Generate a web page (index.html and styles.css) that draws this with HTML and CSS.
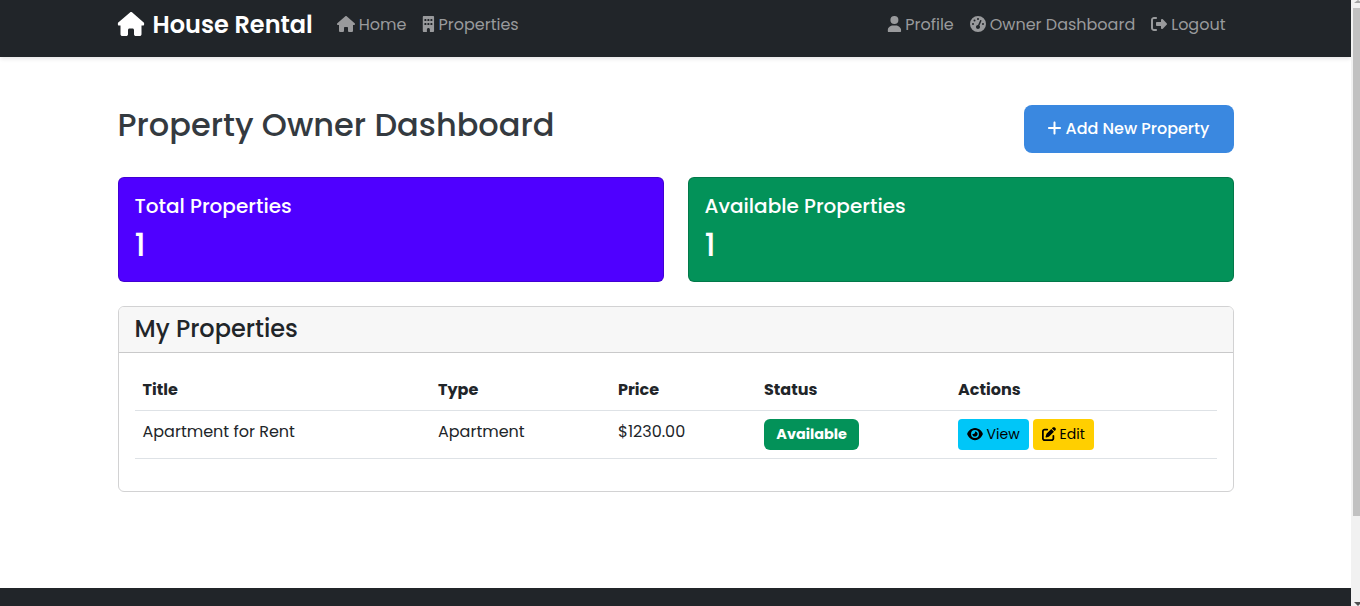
FILE: index.html
```html
<!DOCTYPE html>
<html lang="en">
<head>
<meta charset="utf-8">
<title>Property Owner Dashboard</title>
<link rel="stylesheet" href="styles.css">
</head>
<body>
<svg class="sprite" xmlns="http://www.w3.org/2000/svg">
  <symbol id="house" viewBox="0 0 576 512"><path d="M575.8 255.5c0 18-15 32.1-32 32.1h-32l.7 160.2c0 2.7-.2 5.4-.5 8.1V472c0 22.1-17.9 40-40 40H456c-1.1 0-2.2 0-3.3-.1c-1.4 .1-2.8 .1-4.2 .1H416 392c-22.1 0-40-17.9-40-40V448 384c0-17.700-14.300-32-32-32H256c-17.700 0-32 14.300-32 32v64 24c0 22.100-17.900 40-40 40H160 128.100c-1.500 0-3-.1-4.500-.2c-1.200 .1-2.400 .2-3.600 .2H104c-22.100 0-40-17.900-40-40V360c0-.9 0-1.900 .1-2.800V287.600H32c-18 0-32-14-32-32.100c0-9 3-17 10-24L266.400 8c7-7 15-8 22-8s15 2 21 7L564.800 231.500c8 7 12 15 11 24z"/></symbol>
  <symbol id="building" viewBox="0 0 384 512"><path fill-rule="evenodd" d="M48 0C21.500 0 0 21.500 0 48V464c0 26.500 21.500 48 48 48h96V432c0-26.500 21.500-48 48-48s48 21.500 48 48v80h96c26.500 0 48-21.500 48-48V48c0-26.500-21.500-48-48-48H48zM80 224h32a16 16 0 0 1 16 16v32a16 16 0 0 1-16 16H80a16 16 0 0 1-16-16v-32a16 16 0 0 1 16-16zM176 224h32a16 16 0 0 1 16 16v32a16 16 0 0 1-16 16h-32a16 16 0 0 1-16-16v-32a16 16 0 0 1 16-16zM272 224h32a16 16 0 0 1 16 16v32a16 16 0 0 1-16 16h-32a16 16 0 0 1-16-16v-32a16 16 0 0 1 16-16zM80 96h32a16 16 0 0 1 16 16v32a16 16 0 0 1-16 16H80a16 16 0 0 1-16-16v-32a16 16 0 0 1 16-16zM176 96h32a16 16 0 0 1 16 16v32a16 16 0 0 1-16 16h-32a16 16 0 0 1-16-16v-32a16 16 0 0 1 16-16zM272 96h32a16 16 0 0 1 16 16v32a16 16 0 0 1-16 16h-32a16 16 0 0 1-16-16v-32a16 16 0 0 1 16-16z"/></symbol>
  <symbol id="user" viewBox="0 0 448 512"><path d="M224 256A128 128 0 1 0 224 0a128 128 0 1 0 0 256zm-45.700 48C79.800 304 0 383.800 0 482.300C0 498.700 13.300 512 29.700 512H418.300c16.400 0 29.700-13.300 29.700-29.700C448 383.800 368.200 304 269.700 304H178.300z"/></symbol>
  <symbol id="gauge" viewBox="0 0 512 512"><path fill-rule="evenodd" d="M0 256a256 256 0 1 1 512 0A256 256 0 1 1 0 256zM288 96a32 32 0 1 0 -64 0 32 32 0 1 0 64 0zM256 416c35.300 0 64-28.700 64-64c0-17.400-6.900-33.100-18.100-44.600L366 161.700c5.300-12.100-.2-26.300-12.300-31.600s-26.300 .2-31.600 12.300L257.900 288c-.6 0-1.300 0-1.900 0c-35.300 0-64 28.700-64 64s28.700 64 64 64zM176 144a32 32 0 1 0 -64 0 32 32 0 1 0 64 0zM96 288a32 32 0 1 0 0-64 32 32 0 1 0 0 64zm352-32a32 32 0 1 0 -64 0 32 32 0 1 0 64 0z"/></symbol>
  <symbol id="logout" viewBox="0 0 512 512"><path d="M377.900 105.900L500.700 228.700c7.200 7.200 11.300 17.100 11.300 27.300s-4.100 20.100-11.300 27.300L377.900 406.100c-6.400 6.400-15 9.900-24 9.900c-18.700 0-33.900-15.200-33.900-33.900l0-62.100-128 0c-17.700 0-32-14.300-32-32l0-64c0-17.700 14.300-32 32-32l128 0 0-62.100c0-18.700 15.200-33.900 33.900-33.900c9 0 17.600 3.600 24 9.900zM160 96L96 96c-17.700 0-32 14.300-32 32l0 256c0 17.700 14.300 32 32 32l64 0c17.700 0 32 14.300 32 32s-14.300 32-32 32l-64 0c-53 0-96-43-96-96L0 128C0 75 43 32 96 32l64 0c17.700 0 32 14.300 32 32s-14.300 32-32 32z"/></symbol>
  <symbol id="plus" viewBox="0 0 448 512"><path d="M256 80c0-17.700-14.300-32-32-32s-32 14.300-32 32V224H48c-17.700 0-32 14.300-32 32s14.300 32 32 32H192V432c0 17.700 14.300 32 32 32s32-14.300 32-32V288H400c17.700 0 32-14.300 32-32s-14.300-32-32-32H256V80z"/></symbol>
  <symbol id="eye" viewBox="0 0 576 512"><path fill-rule="evenodd" d="M288 32c-80.800 0-145.500 36.800-192.600 80.600C48.600 156 17.300 208 2.500 243.700c-3.300 7.900-3.300 16.700 0 24.600C17.300 304 48.600 356 95.400 399.400C142.500 443.200 207.200 480 288 480s145.500-36.800 192.600-80.600c46.800-43.500 78.100-95.400 93-131.100c3.300-7.900 3.300-16.700 0-24.600c-14.900-35.700-46.200-87.700-93-131.100C433.500 68.800 368.800 32 288 32zM144 256a144 144 0 1 1 288 0 144 144 0 1 1 -288 0zm144-64c0 35.300-28.700 64-64 64c-7.100 0-13.900-1.200-20.300-3.300c-5.500-1.800-11.900 1.600-11.700 7.400c.3 6.900 1.300 13.800 3.200 20.700c13.700 51.200 66.400 81.600 117.600 67.900s81.600-66.400 67.900-117.600c-11.100-41.500-47.800-69.400-88.600-71.100c-5.800-.2-9.200 6.100-7.400 11.700c2.100 6.400 3.300 13.200 3.300 20.300z"/></symbol>
  <symbol id="edit" viewBox="0 0 512 512"><path d="M471.600 21.700c-21.900-21.900-57.300-21.900-79.200 0L362.300 51.700l97.900 97.900 30.100-30.100c21.900-21.900 21.900-57.300 0-79.200L471.600 21.700zm-299.200 220c-6.100 6.100-10.800 13.600-13.500 21.900l-29.600 88.800c-2.900 8.600-.6 18.100 5.800 24.600s15.900 8.700 24.600 5.800l88.800-29.600c8.200-2.700 15.700-7.400 21.900-13.500L437.700 172.300 339.700 74.300 172.400 241.700zM96 64C43 64 0 107 0 160V416c0 53 43 96 96 96H352c53 0 96-43 96-96V320c0-17.700-14.300-32-32-32s-32 14.300-32 32v96c0 17.700-14.300 32-32 32H96c-17.700 0-32-14.300-32-32V160c0-17.700 14.300-32 32-32h96c17.700 0 32-14.300 32-32s-14.300-32-32-32H96z"/></symbol>
</svg>
<div class="window">
  <div class="page">
    <header class="navbar">
      <div class="container nav-row">
        <a class="brand"><svg class="icon icon-brand"><use href="#house"/></svg><span>House Rental</span></a>
        <nav class="nav-left">
          <a class="link"><svg class="icon w18"><use href="#house"/></svg><span>Home</span></a>
          <a class="link"><svg class="icon icon-building"><use href="#building"/></svg><span>Properties</span></a>
        </nav>
        <nav class="nav-right">
          <a class="link"><svg class="icon w14 icon-user"><use href="#user"/></svg><span>Profile</span></a>
          <a class="link"><svg class="icon"><use href="#gauge"/></svg><span>Owner Dashboard</span></a>
          <a class="link"><svg class="icon"><use href="#logout"/></svg><span>Logout</span></a>
        </nav>
      </div>
    </header>
    <main class="container main">
      <div class="heading">
        <h1>Property Owner Dashboard</h1>
        <a class="add"><svg class="icon w14"><use href="#plus"/></svg><span>Add New Property</span></a>
      </div>
      <div class="stats">
        <section class="stat purple"><h2>Total Properties</h2><p class="number">1</p></section>
        <section class="stat green"><h2>Available Properties</h2><p class="number">1</p></section>
      </div>
      <section class="card">
        <div class="card-head"><h3>My Properties</h3></div>
        <div class="card-body">
          <table>
            <colgroup><col class="c1"><col class="c2"><col class="c3"><col class="c4"><col></colgroup>
            <thead><tr><th>Title</th><th>Type</th><th>Price</th><th>Status</th><th>Actions</th></tr></thead>
            <tbody><tr>
              <td>Apartment for Rent</td><td>Apartment</td><td>$1230.00</td>
              <td class="control"><span class="badge">Available</span></td>
              <td class="control"><div class="actions"><a class="btn view"><svg class="icon"><use href="#eye"/></svg><span>View</span></a><a class="btn edit"><svg class="icon"><use href="#edit"/></svg><span>Edit</span></a></div></td>
            </tr></tbody>
          </table>
        </div>
      </section>
    </main>
    <footer class="footer"></footer>
  </div>
  <div class="scrollbar"><i class="arrow up"></i><div class="thumb"></div><i class="arrow down"></i></div>
</div>
</body>
</html>
```
FILE: styles.css
```css
* { box-sizing: border-box; }
body { margin: 0; background: #fff; color: #212529; overflow: hidden; font: 400 16px/24px Poppins, Inter, sans-serif; }
h1, h2, h3, p { margin: 0; font-weight: 500; }
.sprite { display: none; }
.window { display: flex; height: 606px; }
.page { width: 1351px; display: flex; flex-direction: column; }
.container { width: 1116px; margin: 0 auto; }
.icon { width: 16px; height: 16px; fill: currentColor; flex: none; display: block; }
.w18 { width: 18px; }
.w14 { width: 14px; }

.navbar { height: 57px; flex: none; background: #212529; box-shadow: 0 2px 4px rgba(0, 0, 0, .1); }
.nav-row { display: flex; align-items: center; height: 48px; }
.nav-row span { white-space: nowrap; }
.brand { display: flex; align-items: center; gap: 8px; color: #fff; font-size: 24px; font-weight: 600; line-height: 36px; margin-right: 16px; }
.brand span { padding-top: 1px; }
.icon-brand { width: 27px; height: 24px; transform: translateX(-.5px); }
.icon-building { width: 12px; transform: translateX(-.6px); }
.icon-user { transform: translateX(.4px); }
.nav-left, .nav-right { display: flex; }
.nav-right { margin-left: auto; }
.link { display: flex; align-items: center; gap: 4px; padding: 8px; color: #999a9c; }
.link span { padding-top: 2px; }

.main { flex: 1; padding-top: 48px; }
.heading { display: flex; justify-content: space-between; height: 48px; margin-bottom: 24px; }
h1 { color: #343a40; font-size: 32px; line-height: 40px; }
.add { display: flex; align-items: center; gap: 4px; width: 210px; padding-left: 24px; border-radius: 8px; background: #3a88e0; color: #fff; font-weight: 500; white-space: nowrap; }
.add .icon { margin-bottom: 2px; transform: translateX(-.5px); }
.stats { display: grid; grid-template-columns: 1fr 1fr; gap: 24px; margin-bottom: 24px; }
.stat { height: 105px; padding: 16px; border: 1px solid rgba(0, 0, 0, .175); border-radius: 6px; color: #fff; }
.stat h2 { font-size: 20px; line-height: 24px; margin-bottom: 8px; }
.purple { background: #4f00ff; }
.green { background: #039259; }
.number { font-size: 32px; line-height: 38px; }

.card { height: 186px; border: 1px solid #d2d2d3; border-radius: 6px; overflow: hidden; }
.card-head { height: 46px; padding: 8px 16px; background: #f7f7f7; border-bottom: 1px solid #c9c9ca; }
h3 { font-size: 24px; line-height: 28px; }
.card-body { padding: 16px; }
table { width: 100%; table-layout: fixed; border-collapse: separate; border-spacing: 0; }
.c1 { width: 295.5px; }
.c2 { width: 180px; }
.c3 { width: 146px; }
.c4 { width: 194px; }
th, td { padding: 9px 8px 8px; text-align: left; vertical-align: top; border-bottom: 1px solid #dee2e6; }
th { font-weight: 700; height: 42px; }
td { height: 48px; }
.control { padding-top: 8px; }
.badge { display: block; width: 95px; height: 31px; padding-left: 12.3px; border-radius: 6px; background: #039259; color: #fff; font-size: 14.4px; font-weight: 700; line-height: 31px; }
.actions { display: flex; gap: 4px; height: 31px; }
.btn { display: flex; align-items: center; height: 31px; padding-left: 9px; border-radius: 4px; color: #000; font-size: 14px; gap: 3.600px; }
.btn span { padding-bottom: 2px; }
.btn .icon { width: 14px; height: 14px; margin-bottom: 2px; }
.view { width: 71px; background: #00c6f8; }
.view .icon { width: 16px; }
.edit { width: 61px; background: #ffcf00; }

.footer { height: 18px; background: #212529; }
.scrollbar { width: 9px; padding-left: 2px; background: #f1f1f1; display: flex; flex-direction: column; overflow: hidden; }
.thumb { height: 508px; background: #c1c1c1; }
.arrow { width: 0; height: 0; border: 4px solid transparent; margin-left: 1px; }
.up { border-top: 0; border-bottom: 3px solid #a3a3a3; margin-bottom: 5px; }
.down { border-bottom: 0; border-top: 4px solid #505050; margin-top: auto; }
```
